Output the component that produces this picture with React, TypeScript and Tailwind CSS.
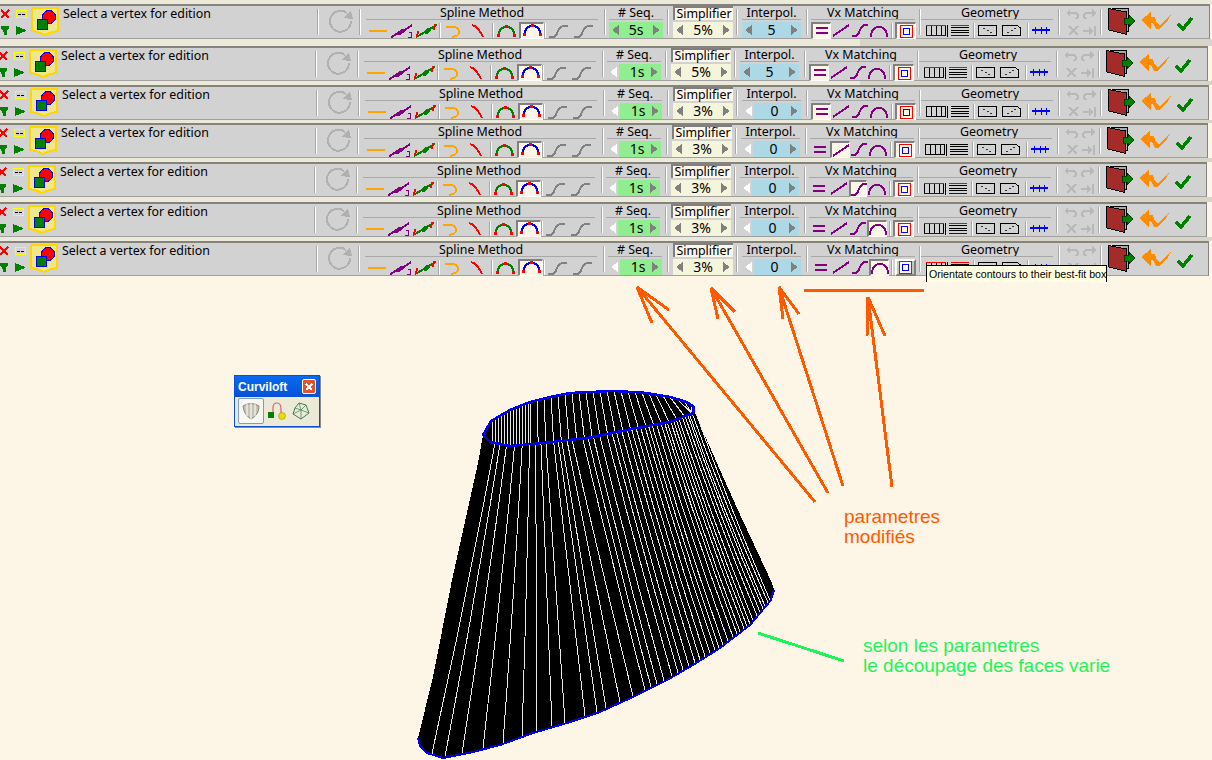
import type { ReactNode } from "react";

const UI_FONT = "font-['Noto_Sans','Liberation_Sans',sans-serif]";

const rows = [
  { pitch: 42, dx: 0, gap: 0, seq: "5s", simp: "5%", interp: "5", vx: 0, seqOn: true, interpOn: true, plain: false },
  { pitch: 39, dx: -2, gap: 0, seq: "1s", simp: "5%", interp: "5", vx: 0, seqOn: false, interpOn: true, plain: false },
  { pitch: 38, dx: -1, gap: 1, seq: "1s", simp: "3%", interp: "0", vx: 0, seqOn: false, interpOn: false, plain: true },
  { pitch: 39, dx: -2, gap: 1, seq: "1s", simp: "3%", interp: "0", vx: 1, seqOn: false, interpOn: false, plain: true },
  { pitch: 40, dx: -3, gap: 1, seq: "1s", simp: "3%", interp: "0", vx: 2, seqOn: false, interpOn: false, plain: false },
  { pitch: 39, dx: -3, gap: 1, seq: "1s", simp: "3%", interp: "0", vx: 3, seqOn: false, interpOn: false, plain: false },
  { pitch: 35, dx: -1, gap: 1, seq: "1s", simp: "3%", interp: "0", vx: 3, seqOn: false, interpOn: false, plain: false, hover: true },
];

const Ico = ({ w, h = 16, children }: { w: number; h?: number; children: ReactNode }) => (
  <svg width={w} height={h} viewBox={`0 0 ${w} ${h}`} fill="none" shapeRendering="crispEdges" className="block shrink-0">
    {children}
  </svg>
);

const Sep = () => <div className="h-[26px] w-[2px] shrink-0 self-center border-l border-[#a8a8a8] bg-white" />;
const MiniSep = () => <div className="h-[15px] w-[2px] shrink-0 border-l border-[#a8a8a8] bg-white" />;

const Cell = ({ w, on, hover, children }: { w: number; on?: boolean; hover?: boolean; children: ReactNode }) => (
  <div
    style={{ width: w }}
    className={
      "flex h-[17px] shrink-0 items-center justify-center " +
      (hover
        ? "border-2 border-[#808080] border-t-white border-l-white bg-[#c4c4c4]"
        : on
          ? "border-t-2 border-l-2 border-r border-b border-[#808080] border-r-white border-b-white bg-[#fdf5e6]"
          : "")
    }
  >
    {children}
  </div>
);

const Header = ({ label, className = "" }: { label: string; className?: string }) => (
  <div className={"h-[14px] border-b border-[#a8a8a8] text-center text-[12.4px] leading-[14px] text-black " + className}>
    {label}
  </div>
);

const Tri = ({ left, color }: { left?: boolean; color: string }) => (
  <Ico w={7} h={10}>
    <path d={left ? "M7 0V10L0 5Z" : "M0 0V10L7 5Z"} fill={color} />
  </Ico>
);

const Stepper = ({ value, bg, width, leftOn = true }: { value: string; bg: string; width: number; leftOn?: boolean }) => (
  <div style={{ width }} className="mt-[2px] flex h-[16px] items-center">
    {!leftOn && (
      <div className="flex h-full w-[12px] shrink-0 items-center pl-[3px]">
        <Tri left color="#ffffff" />
      </div>
    )}
    <div className={"flex h-full flex-1 items-center justify-between px-[3px] text-[14px] leading-none text-black " + bg}>
      {leftOn ? <Tri left color="#808080" /> : <span className="w-px" />}
      <span>{value}</span>
      <Tri color="#808080" />
    </div>
  </div>
);

const Shield = () => (
  <svg width="30" height="30" viewBox="0 0 30 30" shapeRendering="crispEdges" className="block shrink-0">
    <path d="M3 1H28V24L22 25L15 28L8 25L2 24V2Z" fill="#f0e68c" stroke="#ffd700" strokeWidth="2" />
    <circle cx="19" cy="10" r="6.5" fill="#ff0000" stroke="#0000ff" />
    <rect x="7.5" y="12.5" width="10" height="10" fill="#008000" stroke="#0000ff" />
  </svg>
);

const LeftGroup = () => (
  <div className="flex w-[317px] shrink-0">
    <div className="grid h-[30px] w-[30px] shrink-0 grid-cols-[15px_14px] pl-[1px] pt-[3px]">
      <Ico w={9} h={10}>
        <path d="M0 1L8 9M8 1L0 9" stroke="#ff0000" strokeWidth="1.5" />
      </Ico>
      <Ico w={11} h={10}>
        <rect x="0.5" y="1.5" width="10" height="7" stroke="#ffff00" />
        <path d="M2 5.5H5M6 5.5H9" stroke="#000" />
      </Ico>
      <div className="mt-[6px]">
        <Ico w={8} h={9}>
          <path d="M0 0H8V2L5.5 6V9H2.5V6L0 2Z" fill="#008000" />
        </Ico>
      </div>
      <div className="mt-[6px]">
        <Ico w={10} h={9}>
          <path d="M0 0L5 2L10 4V5L5 7L0 9Z" fill="#008000" />
        </Ico>
      </div>
    </div>
    <div className="mt-[1px] w-[33px] shrink-0">
      <Shield />
    </div>
    <div className="text-[12.4px] leading-[15px] text-black">Select a vertex for edition</div>
  </div>
);

const Spinner = () => (
  <div className="flex w-[40px] shrink-0 items-center justify-center pb-[3px] pl-[3px]">
    <svg width="26" height="26" viewBox="0 0 26 26" fill="none" shapeRendering="crispEdges">
      <path d="M19 5A10.5 10.5 0 1 0 23 13" stroke="#b0b0b0" strokeWidth="2" />
      <path d="M15 10L23 3L25 11Z" fill="#b0b0b0" />
    </svg>
  </div>
);

const SplineSection = () => (
  <div className="w-[243px] shrink-0 pl-[5px] pr-[6px]">
    <Header label="Spline Method" />
    <div className="mt-[2px] flex items-center">
      <Cell w={23}>
        <Ico w={18}>
          <path d="M0 8H18" stroke="#ffa500" strokeWidth="2" />
        </Ico>
      </Cell>
      <Cell w={25}>
        <Ico w={22}>
          <path d="M0 15C6 9 8 11 12 8C16 6 17 5 21 2" stroke="#800080" strokeWidth="2" />
          <path d="M7 11L13 7" stroke="#800080" strokeWidth="4" />
          <path d="M18 9H20V14H17" stroke="#800080" />
        </Ico>
      </Cell>
      <Cell w={25}>
        <Ico w={23}>
          <path d="M1 14C7 11 9 10 13 7C17 4 18 5 22 2" stroke="#008000" strokeWidth="2" />
          <path d="M10 10L15 6" stroke="#008000" strokeWidth="4" />
          <path d="M3 8L2 14M20 1L19 7" stroke="#ff0000" strokeWidth="2" />
        </Ico>
      </Cell>
      <MiniSep />
      <Cell w={23}>
        <Ico w={14}>
          <path d="M0 4H8Q13 5 13 9Q13 13 6 14" stroke="#ffa500" strokeWidth="2" />
        </Ico>
      </Cell>
      <Cell w={28}>
        <Ico w={12}>
          <path d="M0 2Q6 3 11 14" stroke="#ff0000" strokeWidth="2" />
        </Ico>
      </Cell>
      <MiniSep />
      <Cell w={25}>
        <Ico w={19}>
          <path d="M2 12Q2 4 9.5 4Q17 4 17 12" stroke="#008000" strokeWidth="2" />
          <path d="M0 11H3V14H0ZM16 11H19V14H16ZM8 2H11V5H8Z" fill="#ff0000" />
        </Ico>
      </Cell>
      <Cell w={25} on>
        <Ico w={19} h={14}>
          <path d="M2 10Q2 2 9.5 2Q17 2 17 10" stroke="#0000ff" strokeWidth="2" />
          <path d="M0 9H3V12H0ZM16 9H19V12H16ZM8 0H11V3H8Z" fill="#ff0000" />
        </Ico>
      </Cell>
      <MiniSep />
      <Cell w={25}>
        <Ico w={19}>
          <path d="M0 14H4Q7 14 9 8Q11 3 15 3H19" stroke="#808080" strokeWidth="2" />
        </Ico>
      </Cell>
      <Cell w={25}>
        <Ico w={19}>
          <path d="M0 14H4Q7 14 9 8Q11 3 15 3H19" stroke="#808080" strokeWidth="2" />
        </Ico>
      </Cell>
    </div>
  </div>
);

const VxSection = ({ active, hover }: { active: number; hover?: boolean }) => (
  <div className="w-[111px] shrink-0 pl-[3px] pr-[4px]">
    <Header label="Vx Matching" className="overflow-hidden" />
    <div className="mt-[2px] flex items-center">
      <Cell w={20} on={active === 0}>
        <Ico w={12} h={10}>
          <path d="M0 2H12M0 7H12" stroke="#800080" strokeWidth="2" />
        </Ico>
      </Cell>
      <Cell w={20} on={active === 1}>
        <Ico w={16} h={13}>
          <path d="M0 12L16 1" stroke="#800080" strokeWidth="2" />
        </Ico>
      </Cell>
      <Cell w={18} on={active === 2}>
        <Ico w={16} h={13}>
          <path d="M0 12H3Q6 12 8 6Q10 1 13 1H16" stroke="#800080" strokeWidth="2" />
        </Ico>
      </Cell>
      <Cell w={20} on={active === 3}>
        <Ico w={18} h={12}>
          <path d="M1 12Q1 2 9 2Q17 2 17 12" stroke="#800080" strokeWidth="2" />
        </Ico>
      </Cell>
      <div className="mx-[2px]">
        <MiniSep />
      </div>
      <Cell w={21} on={!hover} hover={hover}>
        <Ico w={13} h={13}>
          <rect x="0.5" y="0.5" width="12" height="12" stroke="#ff0000" fill="#fdf5e6" />
          <rect x="3.5" y="3.5" width="6" height="6" stroke="#0000ff" />
        </Ico>
      </Cell>
    </div>
  </div>
);

const GeometrySection = ({ plain }: { plain: boolean }) => {
  const top = plain ? "#000000" : "#ff0000";
  const bottom = plain ? "#000000" : "#0000ff";
  return (
    <div className="w-[137px] shrink-0 pr-[5px]">
      <Header label="Geometry" className="overflow-hidden pl-[6px]" />
      <div className="mt-[2px] flex items-center pl-[5px]">
        <Cell w={20}>
          <Ico w={20} h={13}>
            <rect x="0" y="1" width="1" height="11" fill="#000" />
            <rect x="5" y="1" width="1" height="11" fill="#000" />
            <rect x="10" y="1" width="1" height="11" fill="#000" />
            <rect x="15" y="1" width="1" height="11" fill="#000" />
            <rect x="19" y="1" width="1" height="11" fill="#000" />
            <rect x="0" y="1" width="20" height="1" fill={top} />
            <rect x="0" y="11" width="20" height="1" fill={bottom} />
          </Ico>
        </Cell>
        <div className="ml-[1px] h-[12px] w-px bg-black" />
        <Cell w={24}>
          <Ico w={18} h={13}>
            <rect x="0" y="1" width="18" height="1" fill={top} />
            <rect x="0" y="3" width="18" height="1" fill="#000" />
            <rect x="0" y="6" width="18" height="1" fill="#000" />
            <rect x="0" y="8" width="18" height="1" fill="#000" />
            <rect x="0" y="11" width="18" height="1" fill={bottom} />
          </Ico>
        </Cell>
        <div className="ml-[1px]">
          <MiniSep />
        </div>
        <Cell w={25}>
          <Ico w={19} h={11}>
            <path d="M0.5 0.5H18.5V10.5H0.5Z" stroke="#000" />
            <path d="M5 3L7 4M9 5L11 6M12 7L14 8" stroke="#333" />
          </Ico>
        </Cell>
        <Cell w={23}>
          <Ico w={19} h={11}>
            <path d="M0.5 0.5H15.5L18.5 3V10.5H0.5Z" stroke="#000" />
            <path d="M5 8L7 7M9 6L11 5M12 4L14 3" stroke="#333" />
          </Ico>
        </Cell>
        <div className="ml-[4px]">
          <MiniSep />
        </div>
        <Cell w={24}>
          <Ico w={18} h={9}>
            <rect x="0" y="3" width="18" height="2" fill="#0000ff" />
            <path d="M3.5 1V8M9.5 1V8M14.5 1V8" stroke="#0000ff" />
          </Ico>
        </Cell>
      </div>
    </div>
  );
};

const UndoGroup = () => (
  <div className="grid w-[40px] shrink-0 grid-cols-[17px_15px] content-start gap-y-[7px] pl-[6px] pt-[3px]">
    <Ico w={13} h={10}>
      <path d="M3 4H8Q12 4 12 7Q12 9 9 10" stroke="#b8b8b8" strokeWidth="2" />
      <path d="M0 4L4 0V8Z" fill="#b8b8b8" />
    </Ico>
    <Ico w={13} h={10}>
      <path d="M10 4H5Q1 4 1 7Q1 9 4 10" stroke="#b8b8b8" strokeWidth="2" />
      <path d="M13 4L9 0V8Z" fill="#b8b8b8" />
    </Ico>
    <div className="pl-[2px]">
      <Ico w={11} h={10}>
        <path d="M1 0L10 9M10 0L1 9" stroke="#b8b8b8" strokeWidth="2.5" />
      </Ico>
    </div>
    <Ico w={13} h={10}>
      <path d="M0 5H8" stroke="#b8b8b8" strokeWidth="2" />
      <path d="M6 1L10 5L6 9Z" fill="#b8b8b8" />
      <path d="M11.5 0V10" stroke="#b8b8b8" strokeWidth="2" />
    </Ico>
  </div>
);

const EndGroup = () => (
  <div className="flex shrink-0 items-start pl-[6px] pt-[2px]">
    <svg width="28" height="28" viewBox="0 0 28 28" shapeRendering="crispEdges" className="block shrink-0">
      <path d="M4 0.5H20V23H16" fill="#a8a8a8" stroke="#000" />
      <path d="M0.5 0.5L18.5 4V26.5L0.5 22Z" fill="#a52a2a" stroke="#000" />
      <path d="M16 10H21V7L27 13L21 19V16H16Z" fill="#008000" stroke="#000" strokeWidth="0.5" />
    </svg>
    <div className="ml-[5px] mt-[4px]">
      <svg width="32" height="18" viewBox="0 0 32 18" shapeRendering="crispEdges" className="block">
        <path d="M0 8L10 0V5H14L16 11L19 13L27 5L31 1L27 8L20 16L18 17H15L12 11H10V17Z" fill="#ff8c00" />
      </svg>
    </div>
    <div className="ml-[4px] mt-[9px]">
      <svg width="17" height="14" viewBox="0 0 17 14" fill="none" shapeRendering="crispEdges" className="block">
        <path d="M1 7L6 12L15 1" stroke="#008000" strokeWidth="3.5" />
      </svg>
    </div>
  </div>
);

const ToolRow = ({ row, index }: { row: (typeof rows)[number]; index: number }) => (
  <div style={{ height: row.pitch }} className="flex flex-col">
    <div style={{ width: 1210 + row.dx }} className="h-[35px] shrink-0 border-t-2 border-b border-r border-[#84847c] border-b-[#a0a0a0] bg-[#d2d2d2]">
      <div style={{ marginLeft: row.dx }} className="flex h-full w-[1212px]">
        <LeftGroup />
        <Sep />
        <Spinner />
        <Sep />
        <SplineSection />
        <Sep />
        <div className="w-[61px] shrink-0 pl-[3px] pr-[4px]">
          <Header label="# Seq." />
          <Stepper value={row.seq} bg="bg-[#90ee90]" width={54} leftOn={row.seqOn} />
        </div>
        <div style={{ width: row.gap }} className="shrink-0" />
        <Sep />
        <div className="w-[67px] shrink-0 pl-[4px] pr-[3px]">
          <div className="h-[14px] border-t-2 border-l-2 border-[#808080] bg-[#fdf5e6] text-center text-[12.4px] leading-[12px] text-black">
            Simplifier
          </div>
          <Stepper value={row.simp} bg="bg-[#f5f5dc]" width={60} />
        </div>
        <Sep />
        <div className="w-[68px] shrink-0 pl-[4px] pr-[5px]">
          <Header label="Interpol." />
          <Stepper value={row.interp} bg="bg-[#add8e6]" width={59} leftOn={row.interpOn} />
        </div>
        <Sep />
        <VxSection active={row.vx} hover={row.hover} />
        <Sep />
        <GeometrySection plain={row.plain} />
        <Sep />
        <UndoGroup />
        <Sep />
        <EndGroup />
      </div>
    </div>
    {index < rows.length - 1 && (
      <div className="flex flex-1">
        <div className="w-[860px] bg-[#ece9d8]" />
        <div className="flex-1 bg-[#d8d4c8]" />
      </div>
    )}
  </div>
);

// cone outline, read off the picture in page coordinates
const rimBack: number[][] = [[483, 435], [491, 421], [510, 410], [530, 402], [550, 397], [570, 393], [590, 392], [613, 391], [633, 392], [647, 393], [670, 397], [687, 402], [694, 407]];
const rimFront: number[][] = [[483, 435], [490, 442], [510, 446], [543, 443], [587, 438], [637, 428], [670, 422], [693, 413], [694, 407]];
const base: number[][] = [[418, 738], [420, 746], [427, 753], [443, 758], [473, 752], [500, 745], [533, 733], [567, 723], [600, 712], [633, 697], [667, 680], [693, 665], [720, 648], [750, 625], [771, 600], [774, 590]];
const leftEdge: number[][] = [[483, 435], [478, 463], [452, 580], [433, 677], [418, 738]];
const rightEdge: number[][] = [[694, 407], [695, 413], [720, 470], [737, 508], [772, 583], [774, 590]];

const yAt = (curve: number[][], x: number) => {
  for (let i = 0; i < curve.length - 1; i++) {
    const [x0, y0] = curve[i];
    const [x1, y1] = curve[i + 1];
    if (x >= x0 && x <= x1) return y0 + ((y1 - y0) * (x - x0)) / (x1 - x0 || 1);
  }
  return curve[curve.length - 1][1];
};
const pts = (p: number[][]) => p.map((q) => q.join(",")).join(" ");

const baseXs = [432, 445, 462, 483, 503, 522, 537, 552, 565, 585, 597, 606, 620, 633, 645, 651, 657, 664, 672, 678, 683, 689, 695, 700, 705, 710, 715, 719, 723, 728, 733, 737, 740, 744, 747, 750, 753, 757, 760, 763, 765, 768, 770];
const wallLines = baseXs.map((b) => {
  const t = b < 633 ? 495 + (b - 432) * 0.383 : 572 + (b - 633) * 0.89;
  const top = yAt(rimFront, t);
  const bottom = yAt(base, b) - 1;
  const midX = (t + b) / 2 + 3 - (7 * (b - 432)) / 338;
  return `M${t} ${top}Q${midX} ${(top + bottom) / 2} ${b} ${bottom}`;
});
const backXs: number[] = [];
for (let x = 492; x < 530; x += 3) backXs.push(x);
for (let x = 530; x < 692; x += 7) backXs.push(x);
const backLines = backXs.map((x) => {
  const xf = Math.min(x + Math.max(0, x - 525) * 0.1, 692);
  return `M${x} ${yAt(rimBack, x)}L${xf} ${yAt(rimFront, xf)}`;
});

const Arrow = ({ tip, tail, a, b }: { tip: number[]; tail: number[]; a: number[]; b: number[] }) => (
  <path d={`M${tail[0]} ${tail[1]}L${tip[0]} ${tip[1]}L${a[0]} ${a[1]}M${tip[0]} ${tip[1]}L${b[0]} ${b[1]}`} stroke="#ff5a00" strokeWidth="3" fill="none" />
);

const Scene = () => (
  <svg width="1212" height="484" viewBox="0 276 1212 484" shapeRendering="crispEdges" fill="none" className="absolute left-0 top-0">
    <polygon points={pts([...leftEdge, ...base.slice(1), ...rightEdge.slice().reverse().slice(1), ...rimBack.slice().reverse()])} fill="#000000" />
    <g stroke="#e6e6e6" strokeWidth="1">
      {wallLines.map((d, i) => (
        <path key={i} d={d} />
      ))}
      {backLines.map((d, i) => (
        <path key={i} d={d} />
      ))}
    </g>
    <polyline points={pts(base)} stroke="#0000ff" strokeWidth="2" />
    <polygon points={pts([...rimBack, ...rimFront.slice().reverse()])} stroke="#0000ff" strokeWidth="2.5" />
    <Arrow tip={[637, 287]} tail={[815, 502]} a={[669, 310]} b={[652, 323]} />
    <Arrow tip={[711, 288]} tail={[828, 493]} a={[735, 312]} b={[718, 319]} />
    <Arrow tip={[779, 287]} tail={[843, 486]} a={[799, 314]} b={[783, 319]} />
    <Arrow tip={[868, 297]} tail={[892, 487]} a={[885, 336]} b={[867, 336]} />
    <path d="M804 290H924" stroke="#ff5a00" strokeWidth="3" />
    <path d="M758 633L844 661" stroke="#1cf45a" strokeWidth="3" />
  </svg>
);

const Palette = () => (
  <div className="absolute left-[234px] top-[99px] h-[52px] w-[86px] border border-[#0a4fd0] bg-[#ece9d8] shadow-[1px_1px_0_#8a8a8a]">
    <div className="flex h-[21px] items-center justify-between bg-gradient-to-b from-[#0a6af0] to-[#0650d8] pl-[3px] pr-[3px]">
      <span className="text-[12px] font-bold leading-none text-white">Curviloft</span>
      <div className="flex h-[15px] w-[14px] items-center justify-center rounded-[2px] border border-white bg-[#e2552c]">
        <Ico w={8} h={8}>
          <path d="M1 1L7 7M7 1L1 7" stroke="#fff" strokeWidth="2" />
        </Ico>
      </div>
    </div>
    <div className="flex items-center pl-[3px] pt-[1px]">
      <div className="flex h-[26px] w-[26px] items-center justify-center rounded-[2px] border border-[#7f9db9] bg-[#f8f7f2]">
        <svg width="18" height="18" viewBox="0 0 18 18" fill="none">
          <path d="M1 4Q9 -1 17 4Q17 13 9 17Q2 13 1 4Z" fill="#c8c4b4" stroke="#8c8878" />
          <path d="M5 2V14M9 1V17M13 2V14" stroke="#fff" />
        </svg>
      </div>
      <div className="ml-[3px]">
        <svg width="20" height="20" viewBox="0 0 20 20" fill="none">
          <path d="M6 11V7Q6 2 10 2Q14 2 14 8V12" stroke="#e06060" strokeWidth="1.2" />
          <rect x="1" y="11" width="6" height="6" fill="#008000" />
          <circle cx="15" cy="15" r="3.5" fill="#e8e000" stroke="#888800" strokeWidth="0.5" />
        </svg>
      </div>
      <div className="ml-[5px]">
        <svg width="18" height="18" viewBox="0 0 18 18" fill="none" stroke="#3f7f4f">
          <path d="M7 1L14 3L17 11L9 17L1 12L3 6Z" />
          <path d="M7 1L9 8L17 11M3 6L9 8L9 17M1 12L9 8M14 3L9 8" strokeWidth="0.7" />
        </svg>
      </div>
    </div>
  </div>
);

export default function App() {
  return (
    <div className={"relative h-[760px] w-[1212px] overflow-hidden bg-[#fdf5e6] " + UI_FONT}>
      <div className="relative h-[276px]">
        <div className="h-[4px] bg-[#ece9d8]" />
        {rows.map((row, i) => (
          <ToolRow key={i} row={row} index={i} />
        ))}
        <div className="absolute left-[926px] top-[265px] z-10 h-[17px] w-[181px] overflow-hidden whitespace-nowrap border-x border-t border-black bg-[#ffffe1] pl-[2px] font-['Liberation_Sans',sans-serif] text-[10.6px] leading-[16px] text-black">
          Orientate contours to their best-fit box
        </div>
      </div>
      <div className="relative h-[484px] font-['Liberation_Sans',sans-serif]">
        <Scene />
        <Palette />
        <div className="absolute left-[844px] top-[231px] text-[19px] leading-[20px] text-[#ff5a00]">
          parametres
          <br />
          modifiés
        </div>
        <div className="absolute left-[863px] top-[360px] text-[19px] leading-[20px] text-[#1cf45a]">
          selon les parametres
          <br />
          le découpage des faces varie
        </div>
      </div>
    </div>
  );
}
